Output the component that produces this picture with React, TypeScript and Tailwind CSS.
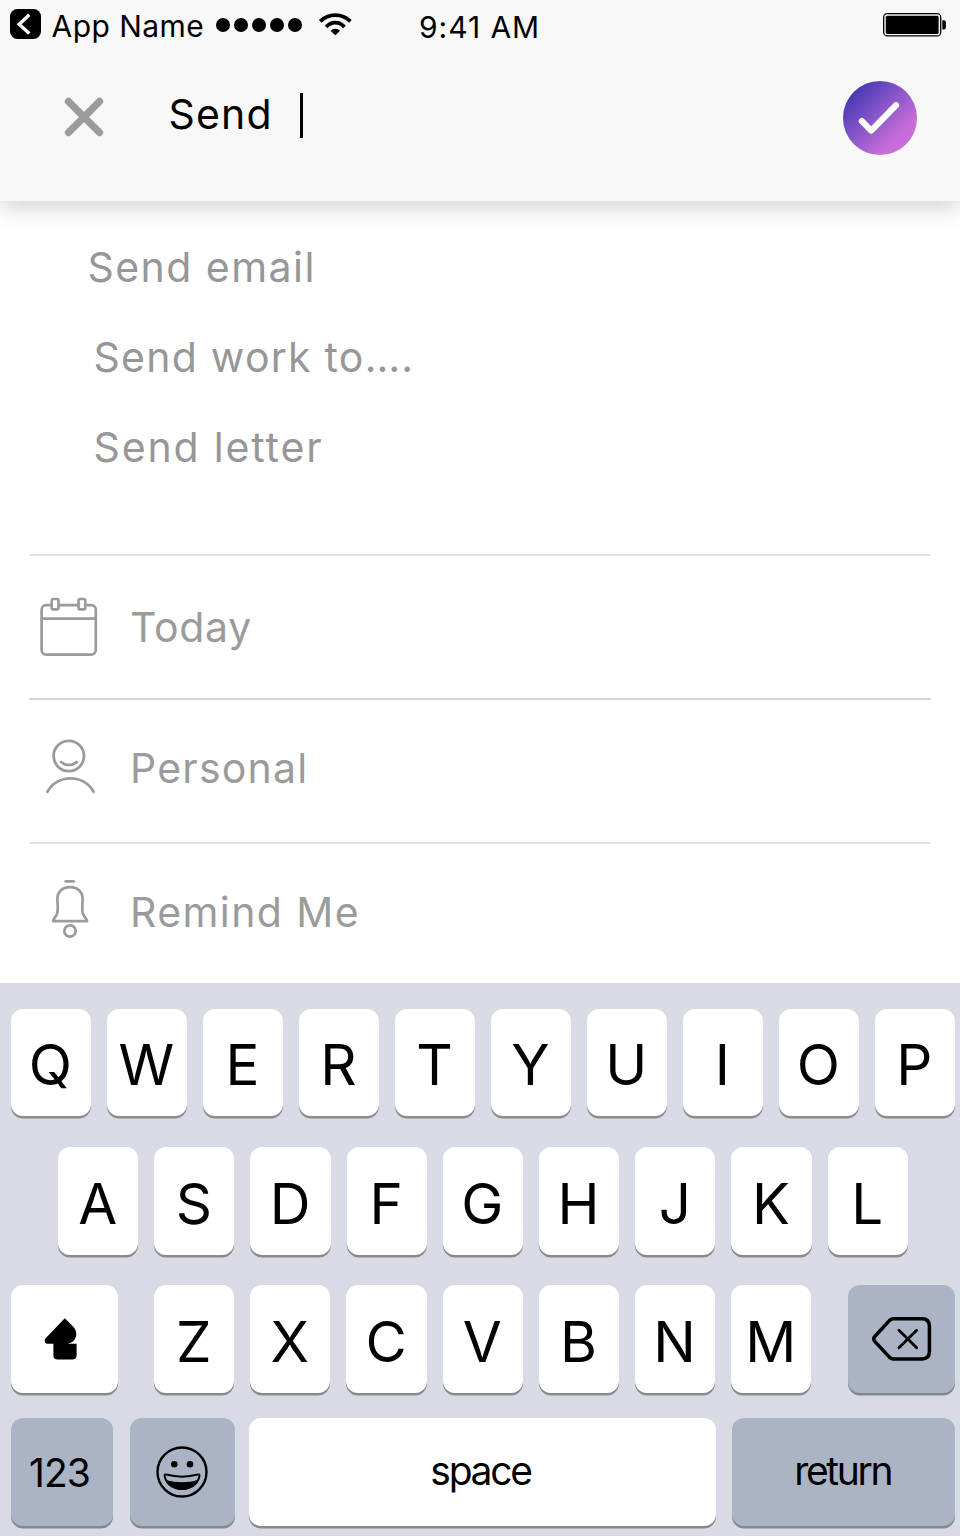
import React from 'react';

interface LetterKeyProps {
  label: string;
}

interface OptionRowProps {
  icon: React.ReactNode;
  label: string;
  className: string;
}

const suggestions = [
  { label: 'Send email', className: 'pl-[87.5px] tracking-[1.45px]' },
  { label: 'Send work to….', className: 'pl-[93.5px] tracking-[1.25px]' },
  { label: 'Send letter', className: 'pl-[93.5px] tracking-[1.85px]' },
];

const topRow = ['Q', 'W', 'E', 'R', 'T', 'Y', 'U', 'I', 'O', 'P'];
const middleRow = ['A', 'S', 'D', 'F', 'G', 'H', 'J', 'K', 'L'];
const bottomRow = ['Z', 'X', 'C', 'V', 'B', 'N', 'M'];

function BackIcon() {
  return (
    <svg width="31" height="30" viewBox="0 0 31 30" fill="none">
      <rect width="31" height="30" rx="7.5" fill="#000" />
      <path d="M19.3 5.7 9.2 15.2l10.1 9.4" stroke="#f8f8f8" strokeWidth="3.4" />
    </svg>
  );
}

function SignalDots() {
  return (
    <div className="flex gap-1">
      {[0, 1, 2, 3, 4].map((dot) => (
        <span key={dot} className="size-[14px] rounded-full bg-black" />
      ))}
    </div>
  );
}

function WifiIcon() {
  return (
    <svg width="35" height="24" viewBox="0 0 35 24" fill="none" stroke="#000" strokeWidth="3.7">
      <path d="M2.2 9.4a21.5 21.5 0 0 1 30.2 0" />
      <path d="M8.2 15a11.5 11.5 0 0 1 18.2 0" />
      <path d="M17.3 23.3l-4.8-4.6a7 7 0 0 1 9.6 0z" fill="#000" stroke="none" />
    </svg>
  );
}

function BatteryIcon() {
  return (
    <svg width="64" height="24" viewBox="0 0 64 24" fill="none">
      <rect x="0.7" y="0.7" width="57" height="22.2" rx="3.5" stroke="#000" strokeWidth="1.3" />
      <rect x="2.8" y="2.7" width="52.8" height="18.2" rx="1.5" fill="#000" />
      <path d="M59.3 7.2h1.6a2 2 0 0 1 2 2v5.2a2 2 0 0 1-2 2h-1.6z" fill="#000" />
    </svg>
  );
}

function CloseIcon() {
  return (
    <svg width="40" height="40" viewBox="0 0 40 40" fill="none">
      <path d="M4.5 4.5l31 31M35.5 4.5l-31 31" stroke="#9b9b9b" strokeWidth="7.4" strokeLinecap="round" />
    </svg>
  );
}

function CheckIcon() {
  return (
    <svg viewBox="0 0 74 74" fill="none">
      <path
        d="M19 40.4l9.4 9.6 25-25.6"
        stroke="#fff"
        strokeWidth="6.2"
        strokeLinecap="round"
        strokeLinejoin="round"
      />
    </svg>
  );
}

function CalendarIcon() {
  return (
    <svg width="58" height="60" viewBox="0 0 58 60" fill="#fff" stroke="#9b9b9b" strokeWidth="2.7">
      <rect x="1.6" y="8.2" width="54.2" height="49.4" rx="4.5" />
      <path d="M2 21.7h53.8" />
      <rect x="11.7" y="2" width="6.8" height="10.3" rx="1.5" />
      <rect x="38.5" y="2" width="6.8" height="10.3" rx="1.5" />
    </svg>
  );
}

function PersonIcon() {
  return (
    <svg width="54" height="58" viewBox="0 0 54 58" fill="none" stroke="#9b9b9b" strokeWidth="2.8" strokeLinecap="round">
      <circle cx="24.8" cy="18" r="15.2" />
      <path d="M17.2 24.1c4.5 3.8 11 3.8 15.5 0" />
      <path d="M3.4 53.8c10-18 36.2-18 46.2 0" />
    </svg>
  );
}

function BellIcon() {
  return (
    <svg
      width="40"
      height="62"
      viewBox="0 0 40 62"
      fill="none"
      stroke="#9b9b9b"
      strokeWidth="2.7"
      strokeLinecap="round"
      strokeLinejoin="round"
    >
      <path d="M15.7 3.3h8" />
      <path d="M20 9.2C12 9.2 7.4 14 7.4 21c0 5 .9 10-.2 14.5-.8 3-4.3 5.5-4.3 7.6h34.2c0-2.1-3.5-4.6-4.3-7.6-1.1-4.5-.2-9.5-.2-14.5 0-7-4.6-11.8-12.6-11.8z" />
      <circle cx="20" cy="53" r="5.7" />
    </svg>
  );
}

function ShiftIcon() {
  return (
    <svg width="34" height="43" viewBox="0 0 34 43" fill="#000">
      <path d="M20.8.3 29 8.5C32.5 12 32.7 16 31.8 19c-1.1 3.500-3.800 6-7.800 6.700h8.600V37c0 3.300-1.500 4.600-5 4.600H14.400c-3.500 0-5-1.300-5-4.600V25.700H3.500C.8 25.700-.2 22.400 1.700 20.200z" />
    </svg>
  );
}

function BackspaceIcon() {
  return (
    <svg width="60" height="46" viewBox="0 0 60 46" fill="none" stroke="#000" strokeLinecap="round" strokeLinejoin="round">
      <path
        d="M21.5 2.8H50c4.8 0 7.4 2.6 7.4 7.4V35.6c0 4.8-2.6 7.4-7.4 7.4H21.5c-1.6 0-2.7-.6-3.9-1.6L3 25.6c-1.6-1.7-1.6-3.7 0-5.4L17.6 4.4c1.2-1 2.3-1.6 3.9-1.6z"
        strokeWidth="3.5"
      />
      <path d="M27 14.3l17.7 17.4M44.7 14.3 27 31.7" strokeWidth="2.8" />
    </svg>
  );
}

function EmojiIcon() {
  return (
    <svg width="52" height="52" viewBox="0 0 52 52" fill="none" stroke="#000">
      <circle cx="26" cy="26" r="24.5" strokeWidth="2.4" />
      <circle cx="18.3" cy="18.3" r="3.3" fill="#000" stroke="none" />
      <circle cx="34" cy="18.3" r="3.3" fill="#000" stroke="none" />
      <path
        d="M10.3 28.5c10 2.7 21.5 2.7 31.5 0 1.8-.5 1.9.8 1.4 2.7C39 47 13 47 8.9 31.2c-.5-1.9-.4-3.2 1.4-2.7z"
        strokeWidth="2"
      />
      <path d="M10.5 34c9.5 3 21.5 3 31 0C36 46 16 46 10.5 34z" fill="#000" stroke="none" />
    </svg>
  );
}

function LetterKey({ label }: LetterKeyProps) {
  return (
    <button className="flex h-[107.5px] w-[80.3px] shrink-0 items-center justify-center rounded-[12px] bg-white pt-[6px] pr-[1px] text-[56.5px] leading-none shadow-[0_2.5px_0_#898a8d]">
      {label}
    </button>
  );
}

function OptionRow({ icon, label, className }: OptionRowProps) {
  return (
    <div className={`mx-[29px] flex items-center text-[41px] leading-none text-[#9b9b9b] ${className}`}>
      <span className="flex w-[101px] shrink-0">{icon}</span>
      <span>{label}</span>
    </div>
  );
}

function Header() {
  return (
    <header className="relative h-[201px] bg-[#f8f8f8] shadow-[0_6px_22px_rgba(0,0,0,0.19)]">
      <div className="flex h-[54px] items-center text-[30px] leading-none">
        <div className="flex w-[419px] items-center pl-[10px]">
          <span className="-mt-[6px]"><BackIcon /></span>
          <span className="-mt-[2px] ml-[10.5px] w-[154.5px] whitespace-nowrap tracking-[0.45px]">App Name</span>
          <span className="-mt-[5px] ml-[10px]"><SignalDots /></span>
          <span className="-mt-[6px] ml-[16px]"><WifiIcon /></span>
        </div>
        <span className="tracking-[0.95px]">9:41 AM</span>
        <span className="-mt-[5px] mr-[13px] ml-auto"><BatteryIcon /></span>
      </div>
      <div className="flex h-[127px] items-center pr-[43.5px] pl-[64px]">
        <button aria-label="Close" className="-mt-[2px]"><CloseIcon /></button>
        <span className="-mt-[7px] ml-[64.5px] w-[131.5px] text-[41px] leading-none tracking-[1.2px]">Send</span>
        <span className="-mt-1 h-[45px] w-[3px] bg-black" />
        <button aria-label="Done" className="mt-[0.5px] ml-auto size-[73.5px] rounded-full bg-linear-135 from-[#3023ae] to-[#c86dd7] to-75%">
          <CheckIcon />
        </button>
      </div>
    </header>
  );
}

function Keyboard() {
  return (
    <section className="h-[553px] bg-[#d8dbe3] pt-[25.5px] text-black">
      <div className="flex gap-[15.7px] pl-[10.8px]">
        {topRow.map((letter) => <LetterKey key={letter} label={letter} />)}
      </div>
      <div className="mt-[31px] flex gap-[15.9px] pl-[58px]">
        {middleRow.map((letter) => <LetterKey key={letter} label={letter} />)}
      </div>
      <div className="mt-[30.8px] flex pr-[5px] pl-[11px]">
        <button aria-label="Shift" className="h-[107.5px] w-[107px] rounded-[12px] bg-white pl-[32.5px] shadow-[0_2.5px_0_#898a8d]">
          <ShiftIcon />
        </button>
        <div className="ml-[36px] flex gap-[15.9px]">
          {bottomRow.map((letter) => <LetterKey key={letter} label={letter} />)}
        </div>
        <button aria-label="Delete" className="ml-auto h-[107.5px] w-[107px] rounded-[12px] bg-[#abb4c4] pl-[24px] shadow-[0_2.5px_0_#84878e]">
          <BackspaceIcon />
        </button>
      </div>
      <div className="mt-[25.5px] flex pl-[11px] text-[39px] leading-none">
        <button className="h-[107.5px] w-[102px] rounded-[12px] bg-[#abb4c4] pr-[5px] tracking-[-0.9px] shadow-[0_2.5px_0_#84878e]">
          123
        </button>
        <button
          aria-label="Emoji"
          className="ml-[17px] flex h-[107.5px] w-[104.5px] items-center justify-center rounded-[12px] bg-[#abb4c4] shadow-[0_2.5px_0_#84878e]"
        >
          <EmojiIcon />
        </button>
        <button className="ml-[14.5px] h-[107.5px] w-[467px] rounded-[12px] bg-white pr-[4px] pb-[3px] tracking-[-2.3px] shadow-[0_2.5px_0_#898a8d]">
          space
        </button>
        <button className="ml-[15.5px] h-[107.5px] w-[223.5px] rounded-[12px] bg-[#abb4c4] pr-[1px] pb-[3px] tracking-[-2.3px] shadow-[0_2.5px_0_#84878e]">
          return
        </button>
      </div>
    </section>
  );
}

export default function App() {
  return (
    <main className="h-[1536px] w-[960px] overflow-hidden bg-white font-['Inter',sans-serif] text-black">
      <Header />
      <ul className="h-[352.5px] pt-[21.5px] text-[41px] text-[#979797]">
        {suggestions.map((item) => (
          <li key={item.label} className={`flex h-[90px] items-center leading-none ${item.className}`}>
            {item.label}
          </li>
        ))}
      </ul>
      <OptionRow
        icon={<span className="-mt-px ml-[11px]"><CalendarIcon /></span>}
        label="Today"
        className="h-[144px] border-t-2 border-[#e2e2e2] pt-px tracking-[0.7px]"
      />
      <OptionRow
        icon={<span className="-mt-[2px] ml-[15px]"><PersonIcon /></span>}
        label="Personal"
        className="h-[144px] border-t-2 border-[#d4d4d4] pb-[5px] tracking-[1.2px]"
      />
      <OptionRow
        icon={<span className="-mt-[6px] ml-[21px]"><BellIcon /></span>}
        label="Remind Me"
        className="h-[141.5px] border-t-2 border-[#e2e2e2] pb-[2px] tracking-[1.4px]"
      />
      <Keyboard />
    </main>
  );
}
